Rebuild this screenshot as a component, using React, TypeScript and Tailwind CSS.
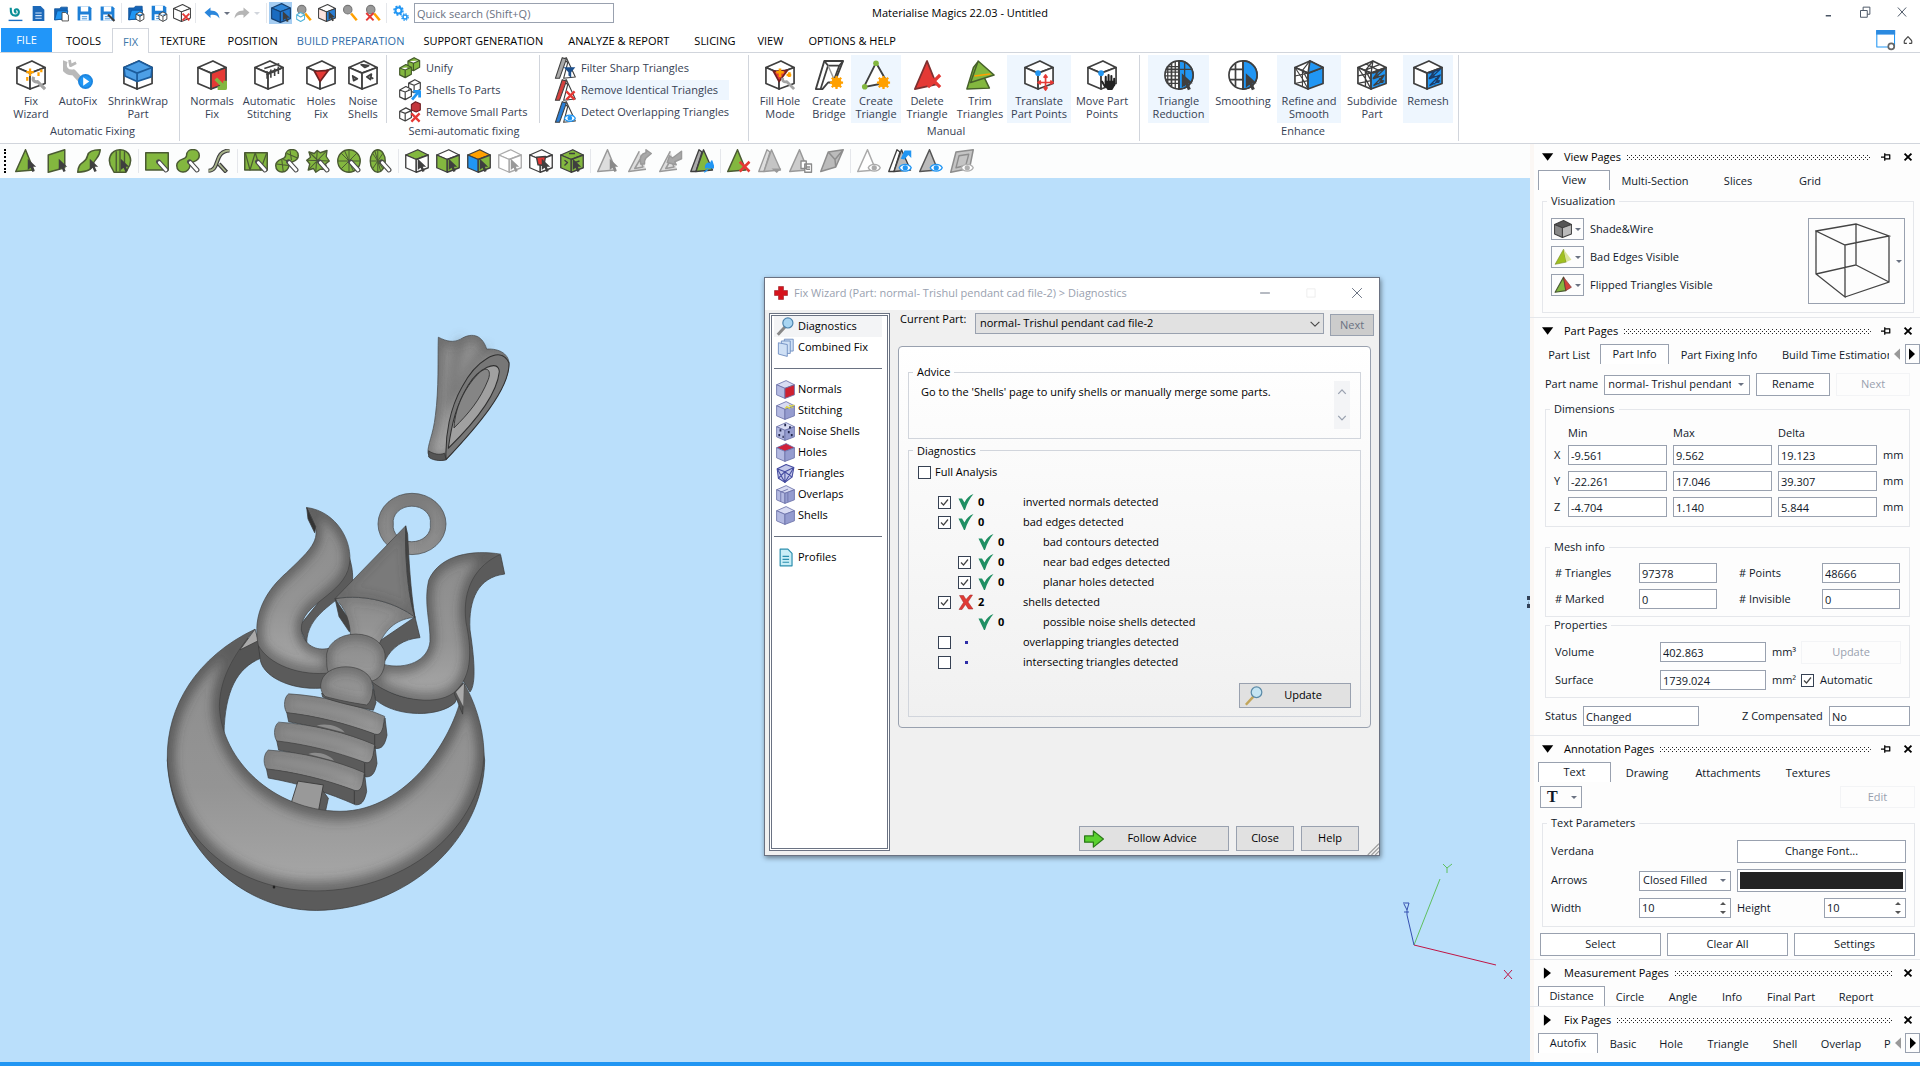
import { useId, type ReactNode } from 'react'
import clsx from 'clsx'

const DARK = '#3f3f3f'
const GREEN = '#83b73f'
const BLUE = '#2196f3'
const RED = '#e53935'
const ORANGE = '#ffa000'

/* ---------- drawing helpers, all on a 32 x 32 grid ---------- */

interface SvgProps {
  className?: string
  children: ReactNode
}

function Svg({ className = 'size-8', children }: SvgProps) {
  return (
    <svg viewBox="0 0 32 32" className={clsx('shrink-0', className)} fill="none" strokeLinejoin="round" aria-hidden="true">
      {children}
    </svg>
  )
}

interface CubeProps {
  top?: string
  left?: string
  right?: string
  stroke?: string
  width?: number
  children?: ReactNode
}

function Cube({ top = '#fff', left = '#fff', right = '#fff', stroke = DARK, width = 1.8, children }: CubeProps) {
  return (
    <g stroke={stroke} strokeWidth={width}>
      <path d="M17 1 31 8 15 14 1 8Z" fill={top} />
      <path d="M1 8 15 14V31L1 25Z" fill={left} />
      <path d="M31 8 15 14V31L31 25Z" fill={right} />
      {children}
    </g>
  )
}

const Cursor = ({ x = 17, y = 13, s = 1.25, fill = DARK }) => (
  <path transform={`translate(${x} ${y}) scale(${s})`} d="M0 0V12L3 9.5 5 14 7.4 13 5.4 8.6 9 8.4Z" fill={fill} />
)

const Cross = ({ x = 18, y = 18, s = 12, color = RED }) => (
  <path d={`M${x} ${y}l${s} ${s}M${x + s} ${y}l${-s} ${s}`} stroke={color} strokeWidth={3.4} />
)

const Eye = ({ color = BLUE }) => (
  <g stroke={color} strokeWidth={1.8} fill="#fff">
    <path d="M15 25C18 19 28 19 31 25 28 31 18 31 15 25Z" />
    <circle cx={23} cy={25} r={2.6} fill={color} />
  </g>
)

const BrushTip = () => (
  <g strokeLinecap="round">
    <path d="M18 17 28 28" stroke="#4b4b4b" strokeWidth={6.5} />
    <path d="M19 18 28 28" stroke="#fff" strokeWidth={3.6} />
  </g>
)

const Burst = ({ x = 24, y = 24 }) => (
  <g transform={`translate(${x} ${y})`} stroke={ORANGE} strokeWidth={2.4}>
    <circle r={4.2} fill={ORANGE} />
    <path d="M0-7V7M-7 0H7M-5-5 5 5M5-5-5 5" />
  </g>
)

const Glass = ({ lens = '#9a9a9a', handle = ORANGE }) => (
  <>
    <path d="M18 17 28 29" stroke={handle} strokeWidth={4.5} />
    <circle cx={12} cy={10} r={7.5} fill={lens} stroke="#777" strokeWidth={2} />
  </>
)

/* ---------- quick access bar ---------- */

const Folder = () => (
  <g fill={BLUE} stroke="#0d4f96" strokeWidth={1.4}>
    <path d="M3 7H12L15 4H27V26L3 28Z" fill="#1565b8" />
    <path d="M3 28 8 11H28L24 26Z" />
  </g>
)

const Disk = () => (
  <>
    <path d="M3 3H26L29 6V29H3Z" fill="#1e7fd6" />
    <path d="M9 3H23V12H9ZM8 18H24V29H8Z" fill="#fff" />
    <path d="M11 22H21M11 26H21" stroke="#1e7fd6" strokeWidth={1.6} />
  </>
)

const BoxBadge = () => (
  <path d="M16 18 23 14 30 18V27L23 31 16 27ZM16 18 23 22 30 18M23 22V31" fill="#fff" stroke={DARK} strokeWidth={1.6} />
)

const quickIcons: Record<string, ReactNode> = {
  Home: (
    <>
      <path d="M7 5C7 16 8 20 16 20 24 20 24 8 18 8 13 8 14 14 18 14" stroke="#0a8f97" strokeWidth={4} />
      <path d="M3 29H29" stroke="#1b6ec2" strokeWidth={2.6} />
    </>
  ),
  New: (
    <>
      <path d="M5 2H20L27 9V30H5Z" fill="#1c68b8" />
      <path d="M10 15H22M10 20H22M10 25H22" stroke="#cfe4fa" strokeWidth={2} />
    </>
  ),
  Open: (
    <>
      <Folder />
      <path d="M17 14H24L29 19V30H17Z" fill="#fff" stroke={DARK} strokeWidth={1.6} />
    </>
  ),
  Save: <Disk />,
  'Save as': (
    <>
      <Disk />
      <path d="M17 18 29 30" stroke={DARK} strokeWidth={4} />
    </>
  ),
  'Load part': (
    <>
      <Folder />
      <BoxBadge />
    </>
  ),
  'Save part': (
    <>
      <Disk />
      <BoxBadge />
    </>
  ),
  'Unload part': (
    <>
      <Cube />
      <Cross x={17} y={17} />
    </>
  ),
  Undo: <path d="M1 15 13 5V11C25 11 30 17 31 27 26 20 21 19 13 20V26Z" fill="#2a86dc" />,
  Redo: <path d="M31 15 19 5V11C7 11 2 17 1 27 6 20 11 19 19 20V26Z" fill="#b5b5b5" />,
  'Select parts': (
    <>
      <Cube top="#2f86d8" left="#1a6bc0" right="#2377cd" stroke="#17406f" />
      <Cursor x={19} />
    </>
  ),
  'Zoom parts': (
    <>
      <Glass />
      <path d="M3 19 10 15 17 19V27L10 31 3 27ZM3 19 10 23 17 19" fill="#fff" stroke="#4fb3d9" strokeWidth={1.8} />
    </>
  ),
  'Select shells': (
    <>
      <Cube left="#fbe3e0" right="#2a7fd6" />
      <Cursor x={19} />
    </>
  ),
  Zoom: <Glass />,
  Unzoom: (
    <>
      <Glass />
      <Cross x={4} y={16} s={13} />
    </>
  ),
  Machine: (
    <g stroke={BLUE}>
      <circle cx={11} cy={11} r={6} strokeWidth={4} />
      <circle cx={11} cy={11} r={9} strokeWidth={3} strokeDasharray="4 3" />
      <circle cx={24} cy={24} r={4} strokeWidth={3} />
      <circle cx={24} cy={24} r={6.5} strokeWidth={2.4} strokeDasharray="3 2.1" />
    </g>
  ),
}

const Separator = () => <span className="mx-[2px] h-5 w-px shrink-0 bg-gray-200" />

function QuickButton({ name, active, icon = 'size-5' }: { name: string; active?: boolean; icon?: string }) {
  return (
    <button aria-label={name} className={clsx('flex h-[22px] w-[23px] items-center justify-center', active && 'bg-[#a5cdf2]')}>
      <Svg className={icon}>{quickIcons[name]}</Svg>
    </button>
  )
}

const Caret = ({ className = 'text-gray-500' }) => (
  <svg viewBox="0 0 8 4" className={clsx('h-[3px] w-1.5 shrink-0', className)} fill="currentColor" aria-hidden="true">
    <path d="M0 0H8L4 4Z" />
  </svg>
)

function TitleBar() {
  return (
    <header className="relative flex h-[26px] items-center pl-1">
      {['Home', 'New', 'Open', 'Save', 'Save as'].map((n) => <QuickButton key={n} name={n} icon="size-[17px]" />)}
      <Separator />
      {['Load part', 'Save part', 'Unload part'].map((n) => <QuickButton key={n} name={n} icon="size-[18px]" />)}
      <Separator />
      <div className="flex w-[66px] items-center justify-between pr-1 pl-0.5">
        <QuickButton name="Undo" icon="size-4" />
        <Caret />
        <QuickButton name="Redo" icon="size-4" />
        <Caret className="text-gray-300" />
      </div>
      <Separator />
      <QuickButton name="Select parts" active />
      {['Zoom parts', 'Select shells', 'Zoom', 'Unzoom'].map((n) => <QuickButton key={n} name={n} icon="size-[18px]" />)}
      <Separator />
      <QuickButton name="Machine" icon="size-4" />
      <input
        aria-label="Quick search"
        placeholder="Quick search (Shift+Q)"
        className="ml-0.5 h-5 w-[200px] border border-gray-400 px-0.5 placeholder:text-gray-500"
      />
      <h1 className="absolute left-1/2 -translate-x-1/2 pt-px">Materialise Magics 22.03 - Untitled</h1>
      <div className="ml-auto flex items-center gap-[25px] pr-3 pb-0.5 text-gray-600">
        <button aria-label="Minimise"><Svg className="size-3"><path d="M10 26H24" stroke="currentColor" strokeWidth={4} /></Svg></button>
        <button aria-label="Restore">
          <Svg className="size-3"><path d="M4 12H22V30H4ZM11 12V3H29V22H22" stroke="currentColor" strokeWidth={2.6} /></Svg>
        </button>
        <button aria-label="Close"><Svg className="size-3"><path d="M5 4 27 28M27 4 5 28" stroke="currentColor" strokeWidth={2.6} /></Svg></button>
      </div>
    </header>
  )
}

/* ---------- ribbon ---------- */

const menu = [
  { name: 'TOOLS', pad: 'px-[11px]' },
  { name: 'FIX', pad: 'px-2.5' },
  { name: 'TEXTURE', pad: 'px-[11px]' },
  { name: 'POSITION', pad: 'px-[11px]' },
  { name: 'BUILD PREPARATION', pad: 'px-2' },
  { name: 'SUPPORT GENERATION', pad: 'px-[11px]' },
  { name: 'ANALYZE & REPORT', pad: 'px-3.5' },
  { name: 'SLICING', pad: 'px-[11px]' },
  { name: 'VIEW', pad: 'px-[11px]' },
  { name: 'OPTIONS & HELP', pad: 'px-3.5' },
]

function MenuBar() {
  return (
    <nav className="flex h-[26px] items-stretch pt-0.5 pl-px">
      <button className="mr-[3px] w-[51px] bg-[#2196f9] text-white">FILE</button>
      {menu.map(({ name, pad }) => (
        <button
          key={name}
          className={clsx(
            'pt-0.5',
            pad,
            name === 'FIX' && 'relative z-10 -mb-px border border-b-0 border-gray-300 bg-white text-[#3d77a8]',
            name === 'BUILD PREPARATION' && 'text-[#2f6ca8]',
          )}
        >
          {name}
        </button>
      ))}
      <div className="ml-auto flex items-center gap-1 pr-1.5">
        <button aria-label="Customise">
          <Svg className="h-[21px] w-6">
            <rect x={2} y={1} width={27} height={25} stroke={BLUE} strokeWidth={1.6} fill="#fff" />
            <path d="M1 0H30V7H1Z" fill="#2b8ae0" />
            <circle cx={24} cy={25} r={4.5} stroke="#666" strokeWidth={2.6} fill="#fff" />
          </Svg>
        </button>
        <button aria-label="Collapse ribbon">
          <Svg className="size-3"><path d="M6 18 16 7 26 18M6 25H13M19 25H26M6 18V25M26 18V25" stroke="#444" strokeWidth={3} /></Svg>
        </button>
      </div>
    </nav>
  )
}

const Mesh = ({ color = DARK }) => (
  <path d="M17 14 29 10 18 20 29 16 18 27 29 22M17 20 23 12M23 26 29 16M20 14 28 24" stroke={color} strokeWidth={1.4} />
)

const GlobeGrid = ({ fine }: { fine?: boolean }) => (
  <g stroke={DARK} strokeWidth={1.8}>
    <circle cx={16} cy={16} r={15} fill="#fff" />
    <path d="M16 1A15 15 0 0 1 16 31Z" fill={BLUE} />
    <path d="M16 1V31M2 10H16M2 21H16M8 4V28" />
    {fine && <path d="M3 7H16M1 13H16M1 17H16M3 25H16M4 7V25M12 2V30M22 3V28M17 10H29" strokeWidth={1.4} />}
  </g>
)

const bigIcons: Record<string, ReactNode> = {
  'Fix Wizard': (
    <>
      <Cube />
      <path d="M15 9V17M11 13H19M12 18V22M24 13V17M27 10V13" stroke={ORANGE} strokeWidth={2.4} />
      <path d="M19 18C17 22 20 24 23 23L31 31" stroke="#a4a4a4" strokeWidth={3.4} />
    </>
  ),
  AutoFix: (
    <>
      <path d="M2 1C-1 9 4 14 11 13L22 25" stroke="#b9b9b9" strokeWidth={6} />
      <path d="M7 0 8 6 14 3" stroke="#b9b9b9" strokeWidth={3} />
      <circle cx={24} cy={23} r={7} fill={BLUE} stroke="#1c86e0" strokeWidth={2} />
      <path d="M21.5 18.5 28 23 21.5 27.5Z" fill="#fff" />
    </>
  ),
  'ShrinkWrap Part': (
    <>
      <Cube />
      <path d="M17 1 31 8 30 18 15 23 2 17 1 8Z" fill="#4d9fe6" stroke="#1c5c9c" strokeWidth={1.8} />
      <path d="M1 8 15 14 31 8M15 14V23" stroke="#1c5c9c" strokeWidth={1.8} />
    </>
  ),
  'Normals Fix': (
    <>
      <Cube right={RED} />
      <path d="M20 20 30 30M30 22V30H22" stroke={GREEN} strokeWidth={4} />
    </>
  ),
  'Automatic Stitching': (
    <Cube>
      <path d="M13 16 29 9M14 12V20M18 10V19M22 9V17M26 7V15M11 9 27 4" strokeWidth={1.7} />
    </Cube>
  ),
  'Holes Fix': (
    <Cube>
      <path d="M9 12 24 11 15 23Z" fill={RED} stroke="#702020" />
    </Cube>
  ),
  'Noise Shells': (
    <Cube>
      <path d="M14 5 22 6 18 8ZM5 17 10 20 6 22ZM20 18 25 15 24 21ZM24 18 27 20" fill="#888" />
    </Cube>
  ),
  'Fill Hole Mode': (
    <>
      <Cube>
        <path d="M9 12 24 11 15 23Z" fill={RED} stroke="#702020" />
      </Cube>
      <path d="M16 9V18M12 13H20M26 13V18M23 16H28" stroke={ORANGE} strokeWidth={2.8} />
      <path d="M19 19C18 23 21 24 23 23L31 31" stroke="#a4a4a4" strokeWidth={3} />
    </>
  ),
  'Create Bridge': (
    <>
      <path d="M2 31 11 1H31L22 24H15L9 31Z" fill="#fff" stroke={DARK} strokeWidth={2} />
      <path d="M7 31 15 6H27L21 22M11 1 15 6M31 1 27 6" stroke={DARK} strokeWidth={1.8} />
      <path d="M15 6 22 22" stroke="#999" strokeWidth={1.4} />
      <Burst />
    </>
  ),
  'Create Triangle': (
    <>
      <path d="M16 3 3 29 28 24Z" stroke={DARK} strokeWidth={2} fill="#fff" />
      <circle cx={16} cy={3.5} r={3} fill={GREEN} />
      <circle cx={4} cy={28.5} r={3} fill={GREEN} />
      <Burst />
    </>
  ),
  'Delete Triangle': (
    <>
      <path d="M16 1 3 31 26 26Z" fill={RED} stroke="#7d3030" strokeWidth={1.8} />
      <Cross x={17} y={16} s={13} />
    </>
  ),
  'Trim Triangles': (
    <g stroke="#46602a" strokeWidth={1.6} fill={GREEN}>
      <path d="M9 8 13 3 26 30 2 31Z" />
      <path d="M14 1 31 16 6 24Z" />
      <path d="M10 17 27 15" stroke={ORANGE} />
    </g>
  ),
  'Translate Part Points': (
    <>
      <Cube />
      <circle cx={15} cy={14} r={3} fill={BLUE} />
      <path d="M23 17V31M16 24H30M21 19 23 16 25 19M21 29 23 32 25 29M18 22 15 24 18 26M28 22 31 24 28 26" stroke={RED} strokeWidth={1.8} />
    </>
  ),
  'Move Part Points': (
    <>
      <Cube />
      <circle cx={15} cy={14} r={3} fill={BLUE} />
      <path d="M20 24V18M23 24V16M26 24V17M29 25V20M19 28 16 23" stroke="#222" strokeWidth={2.2} strokeLinecap="round" />
      <path d="M19 22H30V27L27 32H22L19 28Z" fill="#222" />
    </>
  ),
  'Triangle Reduction': (
    <>
      <GlobeGrid fine />
      <Cursor x={19} y={14} s={1.3} />
    </>
  ),
  Smoothing: (
    <>
      <GlobeGrid />
      <Cursor x={19} y={14} s={1.3} />
    </>
  ),
  'Refine and Smooth': (
    <Cube right={BLUE} top="#fff">
      <path d="M17 1 31 8 15 14Z" fill={BLUE} />
      <path d="M17 1 9 11V28M1 17 15 14M1 8 9 20 15 31M1 25 15 22M9 11 15 22" strokeWidth={1.2} />
    </Cube>
  ),
  'Subdivide Part': (
    <Cube right={BLUE}>
      <path d="M17 1 9 11V28M1 17 15 14M1 8 9 20 15 31M1 25 15 22M9 11 15 22M9 4 23 11M24 5 8 11M17 1 15 14" strokeWidth={1.4} />
      <Mesh />
    </Cube>
  ),
  Remesh: (
    <Cube right={BLUE}>
      <Mesh color="#1d3c66" />
    </Cube>
  ),
}

const MiniCube = ({ x = 0, y = 0, fill = '#fff', stroke = DARK }) => (
  <path
    transform={`translate(${x} ${y})`}
    d="M0 5 9 0 17 4V14L8 19 0 15ZM0 5 8 8 17 4M8 8V19"
    fill={fill}
    stroke={stroke}
    strokeWidth={1.7}
  />
)

const Sliver = ({ fill }: { fill: string }) => (
  <>
    <path d="M13 3 18 1 31 29 14 31 20 8Z" fill="#fff" stroke={DARK} strokeWidth={1.6} />
    <path d="M2 31 12 1 18 3 8 31Z" fill={fill} stroke={DARK} strokeWidth={1.6} />
  </>
)

const smallIcons: Record<string, ReactNode> = {
  Unify: (
    <>
      <MiniCube x={13} y={1} fill={GREEN} stroke="#43592a" />
      <MiniCube x={1} y={11} fill={GREEN} stroke="#43592a" />
    </>
  ),
  'Shells To Parts': (
    <>
      <MiniCube x={14} y={1} />
      <MiniCube x={1} y={11} />
      <path d="M19 30 29 18M21 18H30V27" stroke={BLUE} strokeWidth={4} />
    </>
  ),
  'Remove Small Parts': (
    <>
      <MiniCube x={1} y={10} />
      <path d="M18 5 24 1 31 4V13L25 16 18 13Z" fill="#c3353b" stroke="#6d1c20" strokeWidth={1.6} />
      <Cross x={18} y={18} s={12} />
    </>
  ),
  'Filter Sharp Triangles': (
    <>
      <Sliver fill="#aaa" />
      <path d="M14 15H31L25 22V30L21 27V22Z" fill="#1c4f8c" />
    </>
  ),
  'Remove Identical Triangles': (
    <>
      <Sliver fill="#d6423f" />
      <Cross x={18} y={18} s={12} />
    </>
  ),
  'Detect Overlapping Triangles': (
    <>
      <Sliver fill="#2a7fd6" />
      <Eye />
    </>
  ),
}

interface BigButtonProps {
  label: string
  width: string
  hot?: boolean
}

function BigButton({ label, width, hot }: BigButtonProps) {
  return (
    <button className={clsx('flex h-[68px] flex-col items-center gap-[3px] pt-1 text-center', width, hot && 'bg-[#eef6fe]')}>
      <Svg className="h-8 w-[30px]">{bigIcons[label]}</Svg>
      <span className="leading-[13px]">{label}</span>
    </button>
  )
}

function SmallStack({ items, hot }: { items: string[]; hot?: string }) {
  return (
    <div className="flex flex-col pt-0.5">
      {items.map((item) => (
        <button key={item} className="flex h-[22px] items-center gap-[5px] text-left">
          <Svg className="size-[22px]">{smallIcons[item]}</Svg>
          <span className={clsx('flex h-5 grow items-center', item === hot && 'bg-[#eef6fe]')}>{item}</span>
        </button>
      ))}
    </div>
  )
}

interface GroupProps {
  title: string
  width: string
  children: ReactNode
}

function RibbonGroup({ title, width, children }: GroupProps) {
  return (
    <section className={clsx('my-0.5 flex shrink-0 flex-col border-r border-gray-300', width)}>
      <div className="flex">{children}</div>
      <h2 className="text-center leading-4">{title}</h2>
    </section>
  )
}

function Ribbon() {
  return (
    <div className="flex h-[92px] overflow-hidden border-y border-gray-300 text-gray-700">
      <RibbonGroup title="Automatic Fixing" width="w-[180px] pl-1.5">
        <BigButton label="Fix Wizard" width="w-[50px] px-1" />
        <BigButton label="AutoFix" width="w-11" />
        <BigButton label="ShrinkWrap Part" width="w-[76px]" />
      </RibbonGroup>
      <RibbonGroup title="Semi-automatic fixing" width="w-[569px]">
        <div className="flex border-r border-gray-300 px-1">
          <BigButton label="Normals Fix" width="w-14 px-1" />
          <BigButton label="Automatic Stitching" width="w-[58px]" />
          <BigButton label="Holes Fix" width="w-[46px] px-1" />
          <BigButton label="Noise Shells" width="w-[38px]" />
        </div>
        <div className="w-[153px] border-r border-gray-300 pl-3">
          <SmallStack items={['Unify', 'Shells To Parts', 'Remove Small Parts']} />
        </div>
        <div className="pl-3.5">
          <SmallStack
            items={['Filter Sharp Triangles', 'Remove Identical Triangles', 'Detect Overlapping Triangles']}
            hot="Remove Identical Triangles"
          />
        </div>
      </RibbonGroup>
      <RibbonGroup title="Manual" width="w-[391px] pl-1">
        <BigButton label="Fill Hole Mode" width="w-[54px]" />
        <BigButton label="Create Bridge" width="w-11" />
        <BigButton label="Create Triangle" width="w-[50px]" hot />
        <BigButton label="Delete Triangle" width="w-[52px]" />
        <BigButton label="Trim Triangles" width="w-[54px]" />
        <BigButton label="Translate Part Points" width="w-16 px-0.5" hot />
        <BigButton label="Move Part Points" width="w-[62px]" />
      </RibbonGroup>
      <RibbonGroup title="Enhance" width="w-[319px] pl-2">
        <BigButton label="Triangle Reduction" width="w-[61px]" hot />
        <BigButton label="Smoothing" width="w-[68px]" />
        <BigButton label="Refine and Smooth" width="w-16" hot />
        <BigButton label="Subdivide Part" width="w-[62px]" />
        <BigButton label="Remesh" width="w-[50px]" hot />
      </RibbonGroup>
    </div>
  )
}

/* ---------- marking toolbar ---------- */

const EDGE = '#4a5a33'

const Tri = ({ fill = GREEN, stroke = EDGE }) => <path d="M14 1 1 30 25 28Z" fill={fill} stroke={stroke} strokeWidth={2} />

const DoubleTri = ({ back = '#aaa', front = GREEN, stroke = DARK }) => (
  <g stroke={stroke} strokeWidth={1.8}>
    <path d="M12 1 1 30 8 30 16 4Z" fill={back} />
    <path d="M18 1 8 30 30 28Z" fill={front} />
  </g>
)

const Blob = ({ lines }: { lines?: boolean }) => (
  <g stroke={EDGE} strokeWidth={2} fill={GREEN}>
    <path d="M14 9C14-2 31-2 31 9 31 17 22 16 19 20 18 34 1 34 1 22 1 12 14 15 14 9Z" />
    {lines && <path d="M2 20 18 22M9 14 11 30M16 6 30 12M20 2 22 15M11 14 20 17" strokeWidth={1.4} />}
  </g>
)

const Bent = ({ arrow }: { arrow: string }) => (
  <g stroke="#9a9a9a" strokeWidth={2} fill="#ddd">
    <path d="M15 3 1 30 24 27" />
    <path d="M16 14 9 26 20 24Z" />
    <path d={arrow} fill="#a9a9a9" />
  </g>
)

const Spokes = ({ rx = 15, cx = 16 }) => (
  <g stroke={EDGE} strokeWidth={1.8}>
    <ellipse cx={cx} cy={16} rx={rx} ry={15} fill={GREEN} />
    <path
      d={`M${cx} 1V31M${cx - rx} 16H${cx + rx}M${cx - rx * 0.7} 5.5 ${cx + rx * 0.7} 26.5M${cx + rx * 0.7} 5.5 ${cx - rx * 0.7} 26.5M${cx - rx * 0.4} 2 ${cx + rx * 0.4} 30`}
      strokeWidth={1.3}
    />
  </g>
)

type Tool = [name: string, icon: ReactNode]

const toolGroups: Tool[][] = [
  [
    ['Mark triangle', <><Tri /><Cursor /></>],
    ['Mark plane', <><path d="M3 8 25 1V25L3 31Z" fill={GREEN} stroke={EDGE} strokeWidth={2} /><Cursor /></>],
    ['Mark surface', <><path d="M1 31C2 15 12 20 14 9 15 3 20 1 31 1 30 12 24 13 22 19 20 28 14 30 1 31Z" fill={GREEN} stroke={EDGE} strokeWidth={2} /><Cursor /></>],
    ['Mark shell', <><path d="M6 27C-3 14 4 1 16 1S35 14 26 27L24 31H8Z" fill={GREEN} stroke={EDGE} strokeWidth={2} /><path d="M11 3V30M16 1V30M22 3V20" stroke={EDGE} strokeWidth={1.8} /><Cursor /></>],
  ],
  [
    ['Rectangle selection', <><path d="M1 5H31V28H1Z" fill={GREEN} stroke={EDGE} strokeWidth={2} /><BrushTip /></>],
    ['Free form selection', <><Blob /><BrushTip /></>],
    ['Polyline selection', <><path d="M2 29C18 29 8 3 30 2M16 20 26 31" stroke={DARK} strokeWidth={5.5} /><path d="M2 29C18 29 8 3 30 2M16 20 25 30" stroke="#a9b58c" strokeWidth={2.4} /></>],
  ],
  [
    ['Window triangles', <><path d="M1 5H31V28H1Z" fill={GREEN} stroke={EDGE} strokeWidth={2} /><path d="M2 6 8 28 15 5 22 28 30 6" stroke={EDGE} strokeWidth={1.6} /><BrushTip /></>],
    ['Free form triangles', <><Blob lines /><BrushTip /></>],
    ['Star selection', <><path d="M4 4 11 6 15 2 19 5 28 2 27 10 31 16 26 20 28 27 19 27 13 31 10 26 3 28 5 20 1 15 6 11Z" fill={GREEN} stroke={EDGE} strokeWidth={1.8} /><path d="M4 4 28 27M28 2 3 28M1 15 31 16M15 2 13 31" stroke={EDGE} strokeWidth={1.4} /><BrushTip /></>],
    ['Circle selection', <><Spokes /><BrushTip /></>],
    ['Ellipse selection', <><Spokes rx={10} cx={13} /><BrushTip /></>],
  ],
  [
    ['Mark top', <><Cube top={GREEN} /><Cursor /></>],
    ['Mark sides', <><Cube left={GREEN} right={GREEN} /><Cursor /></>],
    ['Mark colour', <><Cube top={ORANGE} left={BLUE} right={GREEN} /><Cursor /></>],
    ['Unmark all', <><Cube stroke="#aaa" /><Cursor fill="#999" /></>],
    ['Mark holes', <><Cube><path d="M10 11 22 10 20 22 12 21Z" fill={RED} /></Cube><Cursor /></>],
    ['Mark noise', <><Cube top={GREEN} left={GREEN} right={GREEN}><path d="M12 6 20 6M6 15 10 18 6 22M20 18 26 16" /></Cube><Cursor /></>],
  ],
  [
    ['Grow selection', <><Tri fill="#ddd" stroke="#999" /><Cursor fill="#8a8a8a" /></>],
    ['Flip edge', <Bent arrow="M17 20C15 10 18 6 24 5V1L31 6 24 12C22 14 22 16 22 20Z" />],
    ['Flip triangle', <Bent arrow="M11 18 14 9 18 12 30 3V13L21 17 23 21Z" />],
    ['Invert marked', <><DoubleTri /><path d="M21 26C20 20 24 18 27 20L29 16 32 25 24 25 26 23M19 31 24 27" fill={BLUE} stroke={BLUE} strokeWidth={2} /></>],
  ],
  [
    ['Delete marked', <><Tri /><Cross x={17} y={17} s={13} /></>],
    ['Separate marked', <><DoubleTri back="#ddd" front="#c4c4c4" stroke="#9a9a9a" /><path d="M18 26H31L25 32Z" fill="#999" /></>],
    ['Copy marked', <><Tri fill="#ccc" stroke="#999" /><path d="M16 16H23V26H16ZM21 20H30V31H21ZM23 24H28M23 27H28" fill="#fff" stroke="#8a8a8a" strokeWidth={1.8} /></>],
    ['Offset marked', <path d="M1 30 11 4 31 1 21 24ZM11 4 20 14 21 24M20 14 31 1" fill="#bbb" stroke="#8d8d8d" strokeWidth={2} />],
  ],
  [
    ['Hide marked', <><Tri fill="#fff" stroke="#aaa" /><Eye color="#aaa" /></>],
    ['Swap visible', <><DoubleTri back="#fff" front="#bbb" /><path d="M17 13 22 2H31V12L27 8 22 14Z" fill={BLUE} /><Eye /></>],
    ['Show all', <><Tri fill="#bbb" stroke="#555" /><Eye /></>],
    ['Show plane', <><path d="M1 31 8 4 31 1 26 26Z" fill="#c4c4c4" stroke="#8d8d8d" strokeWidth={2} /><path d="M8 25 12 9 25 7 21 22Z" stroke="#8d8d8d" strokeWidth={1.8} /><Eye color="#b0b0b0" /></>],
  ],
]

function Toolbar() {
  return (
    <div className="flex h-[34px] items-center bg-[#fcfdfd] pl-1">
      <span className="h-6 border-l-2 border-dotted border-black" />
      <span className="w-[5px]" />
      {toolGroups.map((group, i) => (
        <div key={i} className="flex items-center">
          {i > 0 && <span className="mr-0.5 ml-[3px] h-6 w-px bg-gray-200" />}
          {group.map(([name, icon]) => (
            <button key={name} aria-label={name} className="flex w-[31px] justify-center">
              <Svg className="size-6">{icon}</Svg>
            </button>
          ))}
        </div>
      ))}
    </div>
  )
}

/* ---------- 3D scene ---------- */

interface SolidProps {
  d: string
  fill?: string
  shade?: number
}

// Flat body with a blurred dark rim clipped to its own outline
function Solid({ d, fill = 'url(#metal)', shade = 34 }: SolidProps) {
  const id = useId()
  return (
    <g>
      <clipPath id={id}>
        <path d={d} clipRule="evenodd" />
      </clipPath>
      <g clipPath={`url(#${id})`}>
        <path d={d} fill={fill} fillRule="evenodd" />
        <path d={d} stroke="#3c3c3c" strokeOpacity={0.6} strokeWidth={shade} filter="url(#soft)" />
      </g>
      <path d={d} stroke="#444" strokeWidth={2} />
    </g>
  )
}

const Side = ({ d, fill = '#5b5b5b' }: { d: string; fill?: string }) => (
  <path d={d} fill={fill} stroke="#3a3a3a" strokeWidth={2} />
)

function Bar({ x = 0, y = 0 }) {
  return (
    <g transform={`translate(${x} ${y})`}>
      <Side d="M440 1024C540 1034 640 1056 704 1082 722 1086 730 1060 735 1040L741 1085C734 1112 726 1120 708 1120 630 1090 540 1064 446 1050Z" />
      <path d="M704 1084V1118" stroke="#333" strokeWidth={2} />
      <Solid
        shade={10}
        d="M446 977C545 982 650 1004 734 1036L729 1064C723 1084 714 1086 698 1080 620 1055 530 1035 440 1026 428 1008 434 984 446 977Z"
      />
    </g>
  )
}

function Pendant() {
  return (
    <svg
      viewBox="0 0 1200 1568"
      preserveAspectRatio="none"
      className="absolute top-[142px] left-[140px] h-[600px] w-[400px]"
      fill="none"
      strokeLinejoin="round"
      role="img"
      aria-label="Trishul pendant"
    >
      <defs>
        <filter id="soft" x="-20%" y="-20%" width="140%" height="140%">
          <feGaussianBlur stdDeviation="15" />
        </filter>
        <linearGradient id="metal" x1="0" y1="0" x2="0" y2="1">
          <stop offset="0" stopColor="#8c8c8c" />
          <stop offset="0.6" stopColor="#949494" />
          <stop offset="1" stopColor="#a8a8a8" />
        </linearGradient>
      </defs>

      {/* bail */}
      <Solid shade={18} d="M895 45C920 56 940 60 962 50 990 34 1025 34 1040 76 1080 74 1110 90 1107 120 1100 180 1020 270 918 365 900 370 868 362 864 348 862 325 880 300 886 250 897 180 893 100 895 45Z" />
      <path d="M962 52C945 110 935 170 925 230M1040 76C1000 110 970 150 950 200" stroke="#555" strokeOpacity={0.6} strokeWidth={16} filter="url(#soft)" />
      <path d="M918 365C915 300 930 230 966 175 1005 110 1080 62 1107 112 1110 180 1010 280 918 365Z" fill="#777" stroke="#2f2f2f" strokeWidth={3} />
      <path d="M925 335C935 270 950 220 985 170 1015 128 1075 100 1078 135 1070 200 990 280 925 335Z" fill="#a0a0a0" stroke="#2f2f2f" strokeWidth={3} />
      <path d="M942 282C945 220 985 165 1018 138 1040 120 1055 130 1045 155 1020 210 985 245 942 282Z" fill="#858585" stroke="#2f2f2f" strokeWidth={2.5} />
      <path d="M866 342C880 350 898 354 914 348L918 365C900 370 875 366 866 358Z" fill="#555" stroke="#2f2f2f" strokeWidth={2} />

      {/* ring */}
      <Solid shade={12} d="M714 533A102 80 0 1 1 918 533A102 80 0 1 1 714 533ZM760 533A56 41 0 1 0 871 533A56 41 0 1 0 760 533Z" />

      {/* coils and stem */}
      <Bar />
      <path d="M530 1060C560 1052 600 1062 614 1078Z" fill="#8c8c8c" />
      <Bar x={-30} y={74} />
      <path d="M505 1134C530 1126 570 1136 582 1152Z" fill="#8c8c8c" />
      <Bar x={-61} y={147} />
      <Side d="M540 1220 565 1250 555 1290H530Z" />
      <path d="M474 1205 550 1215 534 1290 450 1272Z" fill="#999" stroke="#3a3a3a" strokeWidth={2.5} />

      {/* crescent */}
      <Side d="M310 830 355 838 362 884C290 910 255 970 252 1080L200 1060C200 980 240 900 310 830Z" fill="#545454" />
      <Side d="M82 1150C90 1350 280 1543 530 1543 800 1540 1030 1360 1034 1150L1020 1060 520 1450 90 1120Z" />
      <Solid
        shade={46}
        d="M345 808C170 880 78 1010 82 1150 92 1340 270 1492 530 1492 810 1490 1030 1320 1032 1130 1030 1060 1000 990 972 950 950 1090 800 1284 600 1284 400 1282 245 1150 238 1010 240 940 275 880 345 808Z"
      />
      <Side d="M300 862 345 808 355 838Z" fill="#aaa" />
      <circle cx={402} cy={1482} r={4} fill="#222" />

      {/* prongs */}
      <Side d="M628 620C642 660 640 690 630 700 590 740 500 770 500 845L478 800 580 690Z" />
      <Side d="M355 850C400 905 480 930 570 918L545 962C450 968 362 930 360 882Z" />
      <Solid d="M500 490C590 500 640 580 628 640 612 720 480 740 484 810 490 850 530 866 566 858L572 922C480 932 385 900 355 850 335 770 380 705 440 660 500 610 540 580 525 540 518 520 506 505 500 490Z" />
      <Side d="M500 490 504 520 524 556 527 540Z" fill="#333" />
      <Side d="M1082 614 1094 664C1015 672 985 730 990 810 1002 880 1010 950 990 972L940 900 940 720 1040 618Z" />
      <Side d="M697 945C780 1000 880 1010 970 948L945 1000C900 1038 770 1040 706 992Z" />
      <Side d="M942 975 968 1030 972 950Z" fill="#555" />
      <path d="M948 972 970 1010 972 950Z" fill="#aaa" />
      <Solid d="M1082 612C1000 600 900 612 866 680 850 740 872 790 870 840 865 890 800 915 730 900L695 945C760 990 880 1012 940 975 1004 930 992 850 978 790 965 700 1010 640 1082 612Z" />

      {/* blade */}
      <Side d="M585 728 597 775 628 815 640 800Z" fill="#444" />
      <Side d="M825 776 840 830C790 834 755 855 735 890L700 850Z" />
      <Solid shade={10} d="M585 728C680 715 770 740 825 777 780 780 735 800 712 860L632 845C634 790 615 750 585 728Z" />
      <Solid fill="#7a7a7a" shade={10} d="M797 538 585 728C680 715 770 740 825 777 808 730 795 650 797 538Z" />
      <Side d="M797 538C795 650 808 730 825 777 812 710 806 620 803 560Z" fill="#444" />

      {/* knots */}
      <Solid shade={20} d="M560 885A88 58 0 1 1 735 885C735 925 715 940 690 945L565 920C560 910 560 900 560 885Z" />
      <Side d="M545 975 700 965 708 1000 700 1020C650 1010 590 1000 548 985Z" />
      <Solid shade={20} d="M542 955C545 890 690 890 698 955 700 985 690 1000 680 1006 630 1000 590 992 556 984 545 975 542 965 542 955Z" />
    </svg>
  )
}

const Axes = () => (
  <svg viewBox="0 0 120 130" className="absolute right-[10px] bottom-[74px] h-[130px] w-[120px]" fill="none" aria-hidden="true">
    <path d="M14 87 40 21M43 6 47 10 52 6M47 10V15" stroke="#5fc05f" />
    <path d="M14 87 96 107M104 112 112 121M112 112 104 121" stroke="#c01545" />
    <path d="M14 87 7 57M3 45H9L7 52 4 46M4 54H9M7 52V57" stroke="#3550b0" />
  </svg>
)

/* ---------- fix wizard dialog ---------- */

const LAV = '#b4bae2'
const LavCube = ({ top = '#d9dcf3', right = '#959ccf', children }: { top?: string; right?: string; children?: ReactNode }) => (
  <Cube top={top} left={LAV} right={right} stroke="#6a70a8" width={1.4}>{children}</Cube>
)

const pageIcons: Record<string, ReactNode> = {
  Diagnostics: (
    <>
      <path d="M15 17 3 30" stroke="#888" strokeWidth={5} />
      <circle cx={20} cy={10} r={8.5} fill="#a8d5f2" stroke="#4e84ad" strokeWidth={2} />
    </>
  ),
  'Combined Fix': (
    <g fill="#cfe0f5" stroke="#6d8cc0" strokeWidth={1.5}>
      <path d="M14 2H29V22H14Z" />
      <path d="M9 5H24V26H9Z" />
      <path d="M4 8 19 11V31L4 27Z" />
    </g>
  ),
  Normals: <LavCube right="#cf2030" />,
  Stitching: <LavCube><path d="M15 12 31 7M17 9 24 13M22 7 29 11" stroke="#d8d24a" strokeWidth={2.4} /></LavCube>,
  'Noise Shells': <LavCube><path d="M6 14H9M4 22H7M11 25H13M20 17H23M25 22H28M14 5H17M22 9H25" stroke="#22264d" strokeWidth={4} /></LavCube>,
  Holes: <LavCube top="#d0203a" />,
  Triangles: (
    <g stroke="#454ca0" strokeWidth={1.8}>
      <path d="M17 1 30 6 27 22 15 31 4 24 2 8Z" fill="#c3c8ea" />
      <path d="M2 8 15 13 30 6M15 13V31M2 8 15 31 30 6M4 24 15 13 27 22" />
    </g>
  ),
  Overlaps: <LavCube><path d="M8 12 20 7M8 12V28M20 13V28" /></LavCube>,
  Shells: <LavCube />,
  Profiles: (
    <g stroke="#2b8fae" strokeWidth={2}>
      <path d="M7 2H20L27 9V30H7Z" fill="#c9eef7" />
      <path d="M11 14H22M11 19H22M11 24H22" />
    </g>
  ),
}

const pageGroups = [
  ['Diagnostics', 'Combined Fix'],
  ['Normals', 'Stitching', 'Noise Shells', 'Holes', 'Triangles', 'Overlaps', 'Shells'],
  ['Profiles'],
]

function Checkbox({ label, checked }: { label: string; checked?: boolean }) {
  return (
    <span className="relative flex size-[13px] shrink-0">
      <input
        type="checkbox"
        defaultChecked={checked}
        aria-label={label}
        className="peer size-[13px] appearance-none border border-gray-700 bg-white"
      />
      <svg viewBox="0 0 13 13" className="pointer-events-none absolute inset-0 hidden peer-checked:block" fill="none" aria-hidden="true">
        <path d="M3 6.5 5.5 9 10 3.5" stroke="#444" strokeWidth={1.2} />
      </svg>
    </span>
  )
}

const findings = [
  { text: 'inverted normals detected', count: 0, box: true },
  { text: 'bad edges detected', count: 0, box: true },
  { text: 'bad contours detected', count: 0, sub: true },
  { text: 'near bad edges detected', count: 0, box: true, sub: true },
  { text: 'planar holes detected', count: 0, box: true, sub: true },
  { text: 'shells detected', count: 2, box: true },
  { text: 'possible noise shells detected', count: 0, sub: true },
  { text: 'overlapping triangles detected', box: false },
  { text: 'intersecting triangles detected', box: false },
]

function Mark({ count }: { count?: number }) {
  if (count === undefined) return <Svg className="size-4"><path d="M14 14H20V20H14Z" fill="#2f2fa8" /></Svg>
  if (count > 0) return <Svg className="size-4"><path d="M3 3H11L16 11 24 2H29L20 16 30 30H21L15 21 8 31H2L11 17Z" fill="#e03a34" stroke="#a02626" /></Svg>
  return <Svg className="size-4"><path d="M1 9H8L13 17C17 8 23 3 31 0 24 8 18 19 14 32H12Z" fill="#1f8f63" /></Svg>
}

const dialogButton = 'border border-gray-400 bg-[#e1e1e1] text-center'

function Diagnostics() {
  return (
    <div className="rounded-sm border border-gray-400 bg-linear-to-b from-white to-[#f0f0f0] px-[9px] pt-[17px] pb-2.5">
      <fieldset className="border border-gray-300 pb-[9px]">
        <legend className="ml-1 px-1">Advice</legend>
        <div className="flex justify-between pr-2.5 pl-3">
          <p className="pt-[3px]">Go to the 'Shells' page to unify shells or manually merge some parts.</p>
          <div className="flex h-12 w-4 flex-col items-center justify-between bg-gray-100 py-1.5 text-gray-400">
            <Svg className="size-2.5"><path d="M4 22 16 9 28 22" stroke="currentColor" strokeWidth={4} /></Svg>
            <Svg className="size-2.5"><path d="M4 9 16 22 28 9" stroke="currentColor" strokeWidth={4} /></Svg>
          </div>
        </div>
      </fieldset>
      <fieldset className="mt-1 border border-gray-300 pr-[9px] pb-2 pl-2.5">
        <legend className="-ml-1.5 px-1">Diagnostics</legend>
        <label className="-ml-px flex h-[26px] items-center gap-1">
          <Checkbox label="Full Analysis" />
          Full Analysis
        </label>
        <ul className="mt-[7px] pl-[19px]">
          {findings.map(({ text, count, box, sub }) => (
            <li key={text} className={clsx('flex h-5 items-center', sub && 'pl-5')}>
              <span className="w-5">{box !== undefined && <Checkbox label={text} checked={box} />}</span>
              <Mark count={count} />
              <b className="w-[49px] pl-1">{count}</b>
              <span>{text}</span>
            </li>
          ))}
        </ul>
        <button className={clsx(dialogButton, 'mt-[11px] ml-auto flex h-[25px] w-28 items-center pl-1')}>
          <Svg className="size-5">
            <path d="M15 17 3 30" stroke="#c2a55a" strokeWidth={4} />
            <circle cx={20} cy={10} r={8.5} fill="#c4e4f2" stroke="#5c8ba8" strokeWidth={2} />
          </Svg>
          <span className="grow pr-2">Update</span>
        </button>
      </fieldset>
    </div>
  )
}

function FixWizard() {
  return (
    <section
      role="dialog"
      aria-label="Fix Wizard"
      className="absolute top-[99px] left-[764px] flex w-[616px] flex-col border border-gray-500 bg-[#f0f0f0] shadow-[1px_2px_5px_rgba(0,0,0,0.45)]"
    >
      <div className="flex h-8 items-center bg-white pr-4 pb-0.5 pl-2 text-gray-500">
        <Svg className="size-4"><path d="M11 3H21V11H29V21H21V29H11V21H3V11H11Z" fill="#d6131c" stroke="#8d0d12" /></Svg>
        <h2 className="ml-[5px] text-gray-400">Fix Wizard (Part: normal- Trishul pendant cad file-2) &gt; Diagnostics</h2>
        <div className="ml-auto flex items-center gap-[34px]">
          <button aria-label="Minimise dialog"><Svg className="size-3"><path d="M3 16H29" stroke="currentColor" strokeWidth={2.6} /></Svg></button>
          <button aria-label="Maximise dialog"><Svg className="size-3"><path d="M5 5H27V27H5Z" stroke="#eee" strokeWidth={2.6} /></Svg></button>
          <button aria-label="Close dialog"><Svg className="size-3"><path d="M3 3 29 29M29 3 3 29" stroke="currentColor" strokeWidth={2.6} /></Svg></button>
        </div>
      </div>
      <div className="flex gap-2 pt-[3px] pr-[5px] pb-1 pl-1">
        <nav className="w-[121px] shrink-0 border-[3px] border-double border-gray-500 bg-white pr-[5px] pl-0.5">
          {pageGroups.map((group, i) => (
            <ul key={group[0]} className={clsx(i > 0 && 'mt-2.5 border-t border-gray-500 pt-2.5')}>
              {group.map((page) => (
                <li key={page}>
                  <button className={clsx('flex h-[21px] w-full items-center gap-[3px] pl-0.5', page === 'Diagnostics' && 'bg-gray-100')}>
                    <Svg className="size-[19px]">{pageIcons[page]}</Svg>
                    {page}
                  </button>
                </li>
              ))}
            </ul>
          ))}
        </nav>
        <div className="flex min-w-0 grow flex-col">
          <div className="flex items-start">
            <label htmlFor="current-part" className="w-[77px] pl-0.5 leading-3">Current Part:</label>
            <div className="relative grow">
              <select id="current-part" className="h-[21px] w-full appearance-none border border-gray-400 bg-[#e1e1e1] pl-1">
                <option>normal- Trishul pendant cad file-2</option>
              </select>
              <Svg className="pointer-events-none absolute top-1.5 right-1 size-2.5"><path d="M2 9 16 23 30 9" stroke="#444" strokeWidth={3.5} /></Svg>
            </div>
            <button disabled className="mt-px ml-1.5 h-[22px] w-11 border border-gray-400 bg-[#cccccc] text-gray-500">Next</button>
          </div>
          <div className="mt-2.5 mr-[3px]">
            <Diagnostics />
          </div>
          <div className="mt-[98px] mr-[15px] flex justify-end gap-[7px]">
            <button className={clsx(dialogButton, 'flex h-[25px] w-[150px] items-center pl-1')}>
              <Svg className="size-5"><path d="M1 11H15V3L31 16 15 29V21H1Z" fill="#5ad12f" stroke="#2b7a18" strokeWidth={2} /></Svg>
              <span className="grow pr-2">Follow Advice</span>
            </button>
            <button className={clsx(dialogButton, 'w-[58px]')}>Close</button>
            <button className={clsx(dialogButton, 'w-[58px]')}>Help</button>
          </div>
        </div>
      </div>
      <Svg className="absolute right-0 bottom-0 size-3"><path d="M2 32 32 2M12 32 32 12M22 32 32 22" stroke="#999" strokeWidth={3} /></Svg>
    </section>
  )
}

/* ---------- right side pages ---------- */

function Dots() {
  const id = useId()
  return (
    <svg className="h-[5px] w-0 grow" aria-hidden="true">
      <pattern id={id} width="4" height="4" patternUnits="userSpaceOnUse">
        <path d="M0 0H1V1H0ZM2 2H3V3H2Z" fill="#222" />
      </pattern>
      <rect width="100%" height="5" fill={`url(#${id})`} />
    </svg>
  )
}

function PageHeader({ title, closed }: { title: string; closed?: boolean }) {
  return (
    <div className="flex h-[26px] items-center pr-[7px] pl-3 text-black">
      <button aria-label={`Toggle ${title}`}>
        <Svg className="size-3">{closed ? <path d="M5 1 24 16 5 31Z" fill="#000" /> : <path d="M0 6H30L15 26Z" fill="#000" />}</Svg>
      </button>
      <h2 className="mr-1.5 ml-2.5 whitespace-nowrap">{title}</h2>
      <Dots />
      <div className="ml-2.5 flex gap-3">
        {!closed && (
          <button aria-label={`Pin ${title}`}>
            <Svg className="size-2.5"><path d="M0 16H12M12 4V28M12 9H28V22H12" stroke="#000" strokeWidth={4} /></Svg>
          </button>
        )}
        <button aria-label={`Close ${title}`}>
          <Svg className="size-2.5"><path d="M5 5 27 27M27 5 5 27" stroke="#000" strokeWidth={6} /></Svg>
        </button>
      </div>
    </div>
  )
}

interface PageTabsProps {
  tabs: [label: string, width: string][]
  active: string
  scroll?: boolean
}

function PageTabs({ tabs, active, scroll }: PageTabsProps) {
  return (
    <div className="flex h-5 pl-2" role="tablist">
      <div className="flex min-w-0 grow overflow-hidden">
        {tabs.map(([label, width]) => (
          <button
            key={label}
            role="tab"
            aria-selected={label === active}
            className={clsx(
              'shrink-0 whitespace-nowrap',
              width,
              label === active ? 'border border-b-0 border-gray-400 bg-white pb-px' : 'pt-0.5',
            )}
          >
            {label}
          </button>
        ))}
      </div>
      {scroll && (
        <>
          <button aria-label="Scroll left" className="flex w-4 items-center justify-center">
            <Svg className="size-3"><path d="M24 1 8 16 24 31Z" fill="#999" /></Svg>
          </button>
          <button aria-label="Scroll right" className="flex w-4 items-center justify-center border border-gray-400">
            <Svg className="size-3"><path d="M8 1 24 16 8 31Z" fill="#000" /></Svg>
          </button>
        </>
      )}
    </div>
  )
}

function Field({ label, value, width, className }: { label: string; value: string; width: string; className?: string }) {
  return (
    <label className={clsx('flex items-center', className)}>
      <span className="grow">{label}</span>
      <input defaultValue={value} className={clsx('h-5 border border-gray-400 bg-white px-0.5', width)} />
    </label>
  )
}

function Group({ title, className, children }: { title: string; className?: string; children: ReactNode }) {
  return (
    <fieldset className={clsx('border border-gray-200', className)}>
      <legend className="ml-1 px-1 leading-4">{title}</legend>
      {children}
    </fieldset>
  )
}

const ghostButton = 'border border-gray-100 text-gray-400'
const flatButton = 'h-[23px] border border-gray-400 bg-white'

function Spinner({ label, className, width }: { label: string; className?: string; width: string }) {
  return (
    <label className={clsx('flex items-center', className)}>
      <span className="grow">{label}</span>
      <span className={clsx('flex h-5 items-center border border-gray-400 bg-white pr-1', width)}>
        <input defaultValue="10" className="w-0 grow px-0.5" />
        <svg viewBox="0 0 6 12" className="h-3 w-1.5" fill="#555" aria-hidden="true"><path d="M3 0 6 3H0ZM0 9H6L3 12Z" /></svg>
      </span>
    </label>
  )
}

const visualization = [
  { label: 'Shade&Wire', icon: <Cube top="#555" left="#888" right="#bbb" /> },
  { label: 'Bad Edges Visible', icon: <><path d="M17 2 2 29 22 25Z" fill="#a0c020" stroke="#6e8220" /><path d="M17 2 22 25 31 21Z" fill="#dbe59a" /></> },
  { label: 'Flipped Triangles Visible', icon: <><path d="M17 2 2 29 21 26Z" fill={GREEN} stroke={EDGE} strokeWidth={2} /><path d="M17 2 21 26 31 20Z" fill="#d2423a" stroke="#603030" /></> },
]

const dimensions = [
  ['X', '-9.561', '9.562', '19.123'],
  ['Y', '-22.261', '17.046', '39.307'],
  ['Z', '-4.704', '1.140', '5.844'],
]

function ViewPage() {
  return (
    <section>
      <PageHeader title="View Pages" />
      <PageTabs
        active="View"
        tabs={[['View', 'w-[72px]'], ['Multi-Section', 'w-[90px]'], ['Slices', 'w-[76px]'], ['Grid', 'w-[68px]']]}
      />
      <Group title="Visualization" className="mt-[3px] mr-1.5 ml-3 pb-2">
        <div className="flex justify-between px-2 pt-[9px]">
          <ul className="flex flex-col gap-1.5">
            {visualization.map(({ label, icon }) => (
              <li key={label} className="flex h-[22px] items-center gap-1.5">
                <button aria-label={label} className="flex h-full w-[33px] items-center justify-between border border-gray-400 px-0.5">
                  <Svg className="size-[18px]">{icon}</Svg>
                  <Caret />
                </button>
                {label}
              </li>
            ))}
          </ul>
          <button aria-label="View cube" className="flex h-[86px] w-[97px] items-center justify-between border border-gray-400 pr-0.5 pl-1.5">
            <svg viewBox="0 0 76 76" className="size-[76px]" fill="none" stroke="#444" strokeWidth={1.3} aria-hidden="true">
              <path d="M1 8 41 1 74 13 30 22ZM1 8V51L30 74V22M30 74 74 59V13M41 1V42L1 51M41 42 74 59" />
            </svg>
            <Caret />
          </button>
        </div>
      </Group>
    </section>
  )
}

function PartPage() {
  return (
    <section className="mt-1 border-t border-gray-200">
      <PageHeader title="Part Pages" />
      <PageTabs
        active="Part Info"
        scroll
        tabs={[['Part List', 'w-[62px]'], ['Part Info', 'w-[69px]'], ['Part Fixing Info', 'w-[100px]'], ['Build Time Estimation', 'px-[13px]']]}
      />
      <div className="pr-2.5 pl-[15px]">
        <div className="mt-[9px] flex items-center gap-1.5 whitespace-nowrap">
          <label htmlFor="part-name">Part name</label>
          <div className="relative grow">
            <select id="part-name" className="h-5 w-[146px] appearance-none overflow-hidden border border-gray-400 bg-white pr-[18px] pl-[3px] text-clip">
              <option>normal- Trishul pendant cad file-2</option>
            </select>
            <Caret className="pointer-events-none absolute top-2 right-1.5 text-gray-500" />
          </div>
          <button className={clsx(flatButton, 'w-[75px]')}>Rename</button>
          <button disabled className={clsx(ghostButton, 'h-[23px] w-[75px]')}>Next</button>
        </div>
        <Group title="Dimensions" className="mt-[5px] pb-[9px]">
          <div className="grid grid-cols-[8px_repeat(3,99px)_1fr] items-center gap-1.5 pt-2 pl-2">
            <span />
            {['Min', 'Max', 'Delta'].map((h) => <span key={h} className="-mb-0.5 leading-4">{h}</span>)}
            <span />
            {dimensions.map(([axis, ...values]) => (
              <div key={axis} className="contents">
                <span>{axis}</span>
                {values.map((v, i) => (
                  <input
                    key={i}
                    aria-label={`${axis} ${['min', 'max', 'delta'][i]}`}
                    defaultValue={v}
                    className="h-5 w-full border border-gray-400 bg-white px-0.5"
                  />
                ))}
                <span>mm</span>
              </div>
            ))}
          </div>
        </Group>
        <Group title="Mesh info" className="mt-3 pb-[7px]">
          <div className="grid grid-cols-[162px_161px] gap-x-[22px] gap-y-1.5 pt-2 pl-[9px]">
            <Field label="# Triangles" value="97378" width="w-[78px]" />
            <Field label="# Points" value="48666" width="w-[78px]" />
            <Field label="# Marked" value="0" width="w-[78px]" />
            <Field label="# Invisible" value="0" width="w-[78px]" />
          </div>
        </Group>
        <Group title="Properties" className="pb-[7px]">
          <div className="flex flex-col gap-2 pt-[9px] pr-2 pl-[9px]">
            <div className="flex h-5 items-center gap-1.5">
              <Field label="Volume" value="402.863" width="w-[106px]" className="w-[211px]" />
              <span className="w-[23px]">mm³</span>
              <button disabled className={clsx(ghostButton, 'h-[23px] grow')}>Update</button>
            </div>
            <div className="flex h-5 items-center gap-1.5">
              <Field label="Surface" value="1739.024" width="w-[106px]" className="w-[211px]" />
              <span className="w-[23px]">mm²</span>
              <label className="flex items-center gap-1.5">
                <Checkbox label="Automatic" checked />
                Automatic
              </label>
            </div>
          </div>
        </Group>
        <div className="mt-2 flex justify-between">
          <Field label="Status" value="Changed" width="w-[116px]" className="w-[154px]" />
          <Field label="Z Compensated" value="No" width="w-[81px]" className="w-[168px]" />
        </div>
      </div>
    </section>
  )
}

function AnnotationPage() {
  return (
    <section className="mt-[9px] border-t border-gray-200">
      <PageHeader title="Annotation Pages" />
      <PageTabs
        active="Text"
        tabs={[['Text', 'w-[73px]'], ['Drawing', 'w-[72px]'], ['Attachments', 'w-[90px]'], ['Textures', 'w-[70px]']]}
      />
      <div className="flex flex-col pr-[5px] pl-2.5">
        <div className="mt-1 flex justify-between">
          <button aria-label="Text style" className="flex h-[22px] w-[42px] items-center justify-between border border-gray-400 px-1 pl-1.5">
            <span className="font-['Liberation_Serif',serif] text-base font-bold">T</span>
            <Caret />
          </button>
          <button disabled className={clsx(ghostButton, 'w-[75px]')}>Edit</button>
        </div>
        <Group title="Text Parameters" className="mt-[7px] ml-0.5 pb-2">
          <div className="grid grid-cols-[82px_92px_169px] gap-1.5 pt-[9px] pl-2">
            <span className="col-span-2 self-center">Verdana</span>
            <button className={flatButton}>Change Font...</button>
            <label htmlFor="arrows" className="self-center">Arrows</label>
            <div className="relative self-center">
              <select id="arrows" className="h-5 w-full appearance-none border border-gray-400 bg-white pl-[3px]">
                <option>Closed Filled</option>
              </select>
              <Caret className="pointer-events-none absolute top-2 right-[5px] text-gray-500" />
            </div>
            <button aria-label="Annotation colour" className={clsx(flatButton, 'p-0.5')}>
              <span className="block h-full bg-[#222]" />
            </button>
            <Spinner label="Width" width="w-[92px]" className="col-span-2" />
            <Spinner label="Height" width="w-[82px]" />
          </div>
        </Group>
        <div className="mt-1.5 grid grid-cols-3 gap-1.5">
          {['Select', 'Clear All', 'Settings'].map((b) => <button key={b} className={flatButton}>{b}</button>)}
        </div>
      </div>
    </section>
  )
}

function SidePanel() {
  return (
    <aside className="w-[390px] shrink-0 border-l-4 border-[#fbf7f4] bg-[#fdfdfd] text-gray-900">
      <div className="-ml-1">
        <ViewPage />
        <PartPage />
        <AnnotationPage />
        <section className="mt-[3px] border-t border-gray-200">
          <PageHeader title="Measurement Pages" closed />
          <PageTabs
            active="Distance"
            tabs={[['Distance', 'w-[67px]'], ['Circle', 'w-[50px]'], ['Angle', 'w-14'], ['Info', 'w-[42px]'], ['Final Part', 'w-[76px]'], ['Report', 'w-[54px]']]}
          />
        </section>
        <section className="border-t border-gray-200">
          <PageHeader title="Fix Pages" closed />
          <PageTabs
            active="Autofix"
            scroll
            tabs={[['Autofix', 'w-[60px]'], ['Basic', 'w-[50px]'], ['Hole', 'w-[46px]'], ['Triangle', 'w-[68px]'], ['Shell', 'w-[46px]'], ['Overlap', 'w-[66px]'], ['Profiles', 'px-2.5']]}
          />
        </section>
      </div>
    </aside>
  )
}

export default function App() {
  return (
    <div className="flex min-h-screen flex-col bg-white font-['Open_Sans','Noto_Sans',sans-serif] text-[11px] text-black">
      <TitleBar />
      <MenuBar />
      <Ribbon />
      <div className="flex grow">
        <div className="flex min-w-0 grow flex-col">
          <Toolbar />
          <main className="relative grow overflow-hidden bg-[#badffb]">
            <Pendant />
            <Axes />
            <FixWizard />
            <span className="absolute top-[418px] right-0 h-3 border-r-[3px] border-dotted border-slate-700" />
          </main>
        </div>
        <SidePanel />
      </div>
      <footer className="h-1 bg-[#2196f3]" />
    </div>
  )
}
